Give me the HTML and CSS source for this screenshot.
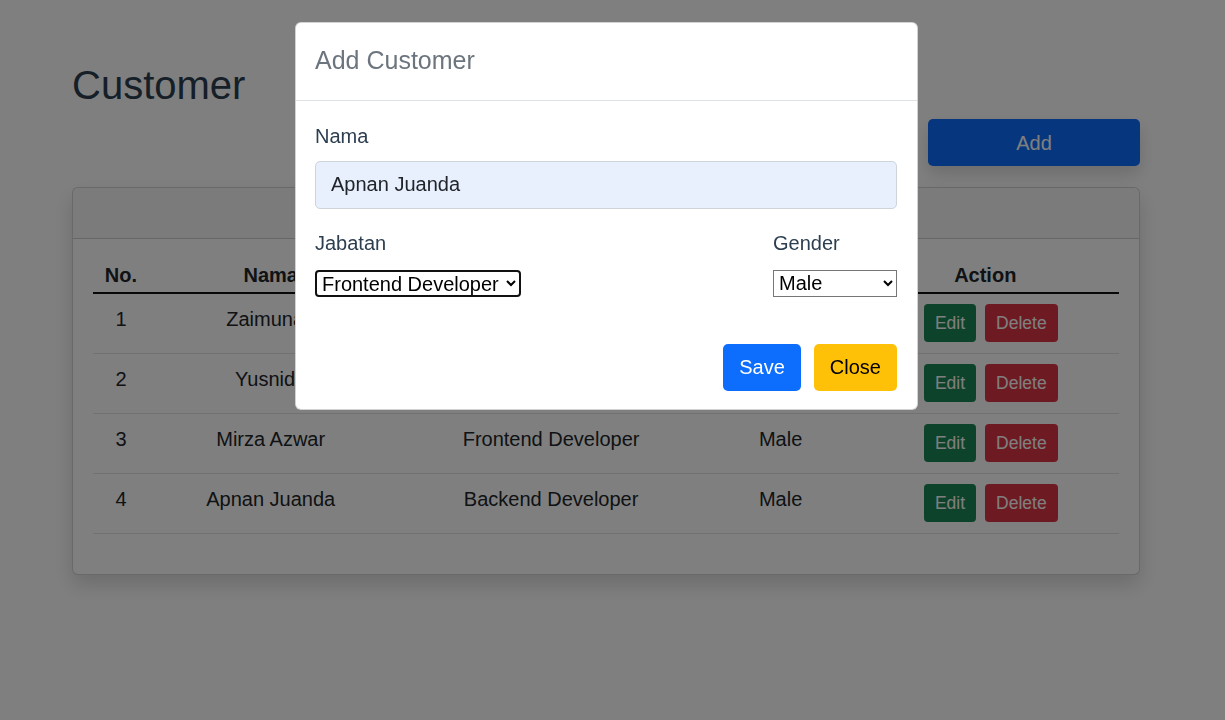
FILE: index.html
```html
<!DOCTYPE html>
<html lang="id">
<head>
<meta charset="utf-8">
<title>Customer</title>
<link rel="stylesheet" href="styles.css">
</head>
<body>
<div class="page">
  <h1 class="title">Customer</h1>
  <div class="toolbar">
    <button class="btn btn-add">Add</button>
  </div>
  <div class="card">
    <div class="card-header">&nbsp;</div>
    <div class="card-body">
      <table class="table">
        <colgroup>
          <col class="c-no"><col class="c-nama"><col class="c-jab"><col class="c-gen"><col class="c-act">
        </colgroup>
        <thead>
          <tr><th>No.</th><th>Nama</th><th>Jabatan</th><th>Gender</th><th>Action</th></tr>
        </thead>
        <tbody>
          <tr><td>1</td><td>Zaimunah</td><td>Backend Developer</td><td>Male</td><td class="actions"><button class="btn-sm btn-edit">Edit</button><button class="btn-sm btn-del">Delete</button></td></tr>
          <tr><td>2</td><td>Yusnida</td><td>Frontend Developer</td><td>Female</td><td class="actions"><button class="btn-sm btn-edit">Edit</button><button class="btn-sm btn-del">Delete</button></td></tr>
          <tr><td>3</td><td>Mirza Azwar</td><td>Frontend Developer</td><td>Male</td><td class="actions"><button class="btn-sm btn-edit">Edit</button><button class="btn-sm btn-del">Delete</button></td></tr>
          <tr><td>4</td><td>Apnan Juanda</td><td>Backend Developer</td><td>Male</td><td class="actions"><button class="btn-sm btn-edit">Edit</button><button class="btn-sm btn-del">Delete</button></td></tr>
        </tbody>
      </table>
    </div>
  </div>
</div>

<div class="backdrop"></div>

<div class="modal">
  <div class="modal-header">
    <h5 class="modal-title">Add Customer</h5>
  </div>
  <div class="modal-body">
    <label class="label">Nama</label>
    <input class="input" type="text" value="Apnan Juanda">
    <div class="row">
      <div class="col-main">
        <label class="label label-sel">Jabatan</label>
        <select class="select select-focus">
          <option>Frontend Developer</option>
          <option>Backend Developer</option>
        </select>
      </div>
      <div class="col-side">
        <label class="label label-sel">Gender</label>
        <select class="select select-full">
          <option>Male</option>
          <option>Female</option>
        </select>
      </div>
    </div>
  </div>
  <div class="modal-footer">
    <button class="btn btn-save">Save</button>
    <button class="btn btn-close">Close</button>
  </div>
</div>
</body>
</html>
```

FILE: styles.css
```css
* { box-sizing: border-box; }

html, body {
  margin: 0;
  padding: 0;
  background: #ffffff;
}

body {
  font-family: "Liberation Sans", Arial, sans-serif;
  color: #2c3e50;
  font-size: 20px;
  line-height: 1.5;
  height: 720px;
  overflow: hidden;
}

.page {
  width: 1068px;
  margin-left: 72px;
  padding-top: 61px;
}

.title {
  margin: 0;
  font-size: 40px;
  font-weight: 400;
  line-height: 48px;
  color: #2c3e50;
}

.toolbar {
  display: flex;
  justify-content: flex-end;
  margin-top: 10px;
  margin-bottom: 21px;
}

.btn {
  font-family: "Liberation Sans", Arial, sans-serif;
  font-size: 20px;
  line-height: 30px;
  padding: 7.5px 15px;
  border: 1px solid transparent;
  border-radius: 5px;
  cursor: pointer;
}

.btn-add {
  width: 212px;
  height: 47px;
  background: #0d6efd;
  color: #ffffff;
  box-shadow: 0 8px 16px rgba(0, 0, 0, 0.15);
}

.card {
  border: 1px solid rgba(0, 0, 0, 0.175);
  border-radius: 6px;
  background: #ffffff;
  box-shadow: 0 10px 20px rgba(0, 0, 0, 0.15);
}

.card-header {
  padding: 10px 20px;
  line-height: 30px;
  background: rgba(0, 0, 0, 0.03);
  border-bottom: 1px solid rgba(0, 0, 0, 0.175);
  border-radius: 6px 6px 0 0;
}

.card-body {
  padding: 20px 20px 20px;
}

.table {
  width: 100%;
  border-collapse: collapse;
  color: #212529;
  text-align: center;
  margin-bottom: 20px;
}

.c-no { width: 56px; }
.c-nama { width: 244px; }
.c-jab { width: 318px; }
.c-gen { width: 142px; }
.c-act { width: 268px; }

.table th {
  font-weight: 700;
  line-height: 30px;
  padding: 1px 0 2px;
  border-bottom: 2px solid #111111;
}

.table td {
  vertical-align: top;
  padding: 10px 0;
  height: 60px;
  line-height: 30px;
  border-bottom: 1px solid #dee2e6;
}

.table td.actions {
  padding-left: 11px;
}

.btn-sm {
  font-family: "Liberation Sans", Arial, sans-serif;
  font-size: 17.5px;
  line-height: 26px;
  height: 38px;
  padding: 5px 10px;
  border: 1px solid transparent;
  border-radius: 4px;
  color: #ffffff;
  vertical-align: top;
}

.btn-edit { background: #198754; }
.btn-del { background: #dc3545; margin-left: 9px; }

.backdrop {
  position: fixed;
  inset: 0;
  background: rgba(0, 0, 0, 0.5);
}

.modal {
  position: fixed;
  left: 295px;
  top: 22px;
  width: 623px;
  background: #ffffff;
  border: 1px solid rgba(0, 0, 0, 0.175);
  border-radius: 6px;
}

.modal-header {
  padding: 19px 19px 20px;
  border-bottom: 1px solid #dee2e6;
}

.modal-title {
  margin: 0;
  font-size: 25px;
  font-weight: 400;
  line-height: 37.5px;
  color: #6c757d;
}

.modal-body {
  padding: 20px 20px 20px 19px;
}

.label {
  display: block;
  line-height: 30px;
  margin-bottom: 10px;
  color: #2c3e50;
}

.label-sel {
  margin-bottom: 12px;
}

.input {
  display: block;
  width: 100%;
  height: 48px;
  padding: 7.5px 15px;
  font-family: "Liberation Sans", Arial, sans-serif;
  font-size: 20px;
  line-height: 30px;
  color: #212529;
  background: #e8f0fe;
  border: 1px solid #ced4da;
  border-radius: 5px;
  margin-bottom: 19px;
}

.row {
  display: flex;
}

.col-main {
  width: 458px;
}

.col-side {
  flex: 1;
}

.select {
  display: block;
  height: 27px;
  font-family: "Liberation Sans", Arial, sans-serif;
  font-size: 20px;
  color: #000000;
  background: #ffffff;
  border: 1px solid #767676;
  border-radius: 0;
  padding: 0 1px;
}

.select-focus {
  width: 206px;
  border: 2px solid #111111;
  border-radius: 4px;
}

.select-full {
  width: 124px;
}

.modal-footer {
  display: flex;
  justify-content: flex-end;
  gap: 13px;
  padding: 27px 20px 18px;
}

.btn-save {
  height: 47px;
  background: #0d6efd;
  color: #ffffff;
}

.btn-close {
  height: 47px;
  background: #ffc107;
  color: #000000;
}
```
